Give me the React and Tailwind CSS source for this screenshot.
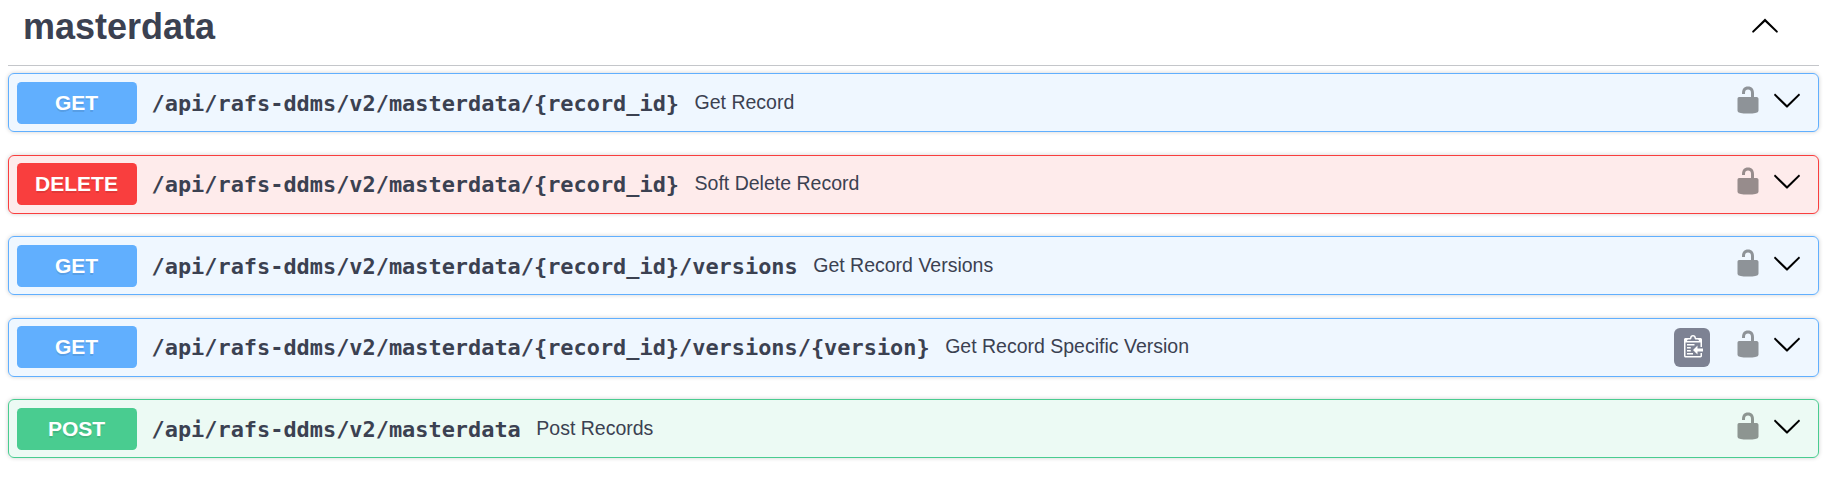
const ARROW_UP =
  "M 17.418 14.908 C 17.69 15.176 18.127 15.176 18.397 14.908 C 18.667 14.64 18.668 14.207 18.397 13.939 L 10.489 6.109 C 10.219 5.841 9.782 5.841 9.51 6.109 L 1.602 13.939 C 1.332 14.207 1.332 14.64 1.602 14.908 C 1.873 15.176 2.311 15.176 2.581 14.908 L 10 7.767 L 17.418 14.908 Z";
const ARROW_DOWN =
  "M17.418 6.109c.272-.268.709-.268.979 0s.271.701 0 .969l-7.908 7.83c-.27.268-.707.268-.979 0l-7.908-7.83c-.27-.268-.27-.701 0-.969.271-.268.709-.268.979 0L10 13.25l7.418-7.141z";
const UNLOCKED =
  "M15.8 8H14V5.6C14 2.703 12.665 1 10 1 7.334 1 6 2.703 6 5.6V6h2v-.801C8 3.754 8.797 3 10 3c1.203 0 2 .754 2 2.199V8H4c-.553 0-1 .646-1 1.199V17c0 .549.428 1.139.951 1.307l1.197.387C5.672 18.861 6.55 19 7.1 19h5.8c.549 0 1.428-.139 1.951-.307l1.196-.387c.524-.167.953-.757.953-1.306V9.199C17 8.646 16.352 8 15.8 8z";
const CLIPBOARD =
  "M4 12h4v1H4v-1zm5-6H4v1h5V6zm2 3V7l-3 3 3 3v-2h5V9h-5zM6.5 8H4v1h2.5V8zM4 11h2.5v-1H4v1zm9 1h1v2c-.02.28-.11.52-.3.7-.19.18-.42.28-.7.3H3c-.55 0-1-.45-1-1V3c0-.55.45-1 1-1h3c0-1.11.89-2 2-2 1.11 0 2 .89 2 2h3c.55 0 1 .45 1 1v5h-1V5H3v9h10v-2zM4 4h8c0-.55-.45-1-1-1h-1c-.55 0-1-.45-1-1s-.45-1-1-1-1 .45-1 1-.45 1-1 1H5c-.55 0-1 .45-1 1z";

const METHODS = {
  GET: { block: "border-[#61affe] bg-[#61affe]/10", badge: "bg-[#61affe]" },
  DELETE: { block: "border-[#f93e3e] bg-[#f93e3e]/10", badge: "bg-[#f93e3e]" },
  POST: { block: "border-[#49cc90] bg-[#49cc90]/10", badge: "bg-[#49cc90]" },
};

const OPERATIONS = [
  { method: "GET", path: "/api/rafs-ddms/v2/masterdata/{record_id}", summary: "Get Record", gap: "mb-[23px]", pad: "pt-2" },
  { method: "DELETE", path: "/api/rafs-ddms/v2/masterdata/{record_id}", summary: "Soft Delete Record", gap: "mb-[22px]", pad: "pt-[7px]" },
  { method: "GET", path: "/api/rafs-ddms/v2/masterdata/{record_id}/versions", summary: "Get Record Versions", gap: "mb-[23px]", pad: "pt-2" },
  { method: "GET", path: "/api/rafs-ddms/v2/masterdata/{record_id}/versions/{version}", summary: "Get Record Specific Version", gap: "mb-[22px]", pad: "pt-[7px]", copy: true },
  { method: "POST", path: "/api/rafs-ddms/v2/masterdata", summary: "Post Records", gap: "mb-0", pad: "pt-2" },
];

function Icon({ d, className = "" }) {
  return (
    <svg viewBox="0 0 20 20" className={`size-[30px] shrink-0 ${className}`} aria-hidden="true">
      <path d={d} />
    </svg>
  );
}

function Operation({ method, path, summary, gap, pad, copy }) {
  const colors = METHODS[method];
  return (
    <div className={`flex h-[59px] items-start rounded-[6px] border pl-2 pr-4 shadow-[0_0_4.5px_rgba(0,0,0,0.19)] ${colors.block} ${gap} ${pad}`}>
      <div className={`flex h-[42px] w-[120px] shrink-0 items-center justify-center rounded-[4.5px] pr-px text-[21px] leading-6 font-bold text-white [text-shadow:0_1.5px_0_rgba(0,0,0,0.1)] ${colors.badge}`}>
        {method}
      </div>
      <div className="flex h-[42px] items-center pl-[14.5px]">
        <span className="mt-0.5 whitespace-nowrap font-['DejaVu_Sans_Mono',monospace] text-[21.92px] leading-6 font-bold">{path}</span>
        <span className="mb-0.5 ml-[15.5px] whitespace-nowrap text-[19.5px] leading-6">{summary}</span>
      </div>
      <div className="ml-auto flex h-[42px] items-center">
        {copy && (
          <button className="mr-[23px] flex h-[39px] w-9 items-center justify-center rounded-[6px] bg-[#7d8293]">
            <svg viewBox="0 0 15 16" className="h-6 w-[22.5px]" aria-hidden="true">
              <path fill="#fff" fillRule="evenodd" d={CLIPBOARD} />
            </svg>
          </button>
        )}
        <Icon d={UNLOCKED} className="mb-1.5 opacity-40" />
        <Icon d={ARROW_DOWN} className="mb-1.5 ml-[9px]" />
      </div>
    </div>
  );
}

export default function App() {
  return (
    <div className="h-[477px] bg-white pr-[11px] pl-2 font-['Liberation_Sans',Arial,sans-serif] text-[#3b4151]">
      <div className="mb-[7px] flex h-[66px] items-start justify-between border-b border-[#3b4151]/30 pr-[39px] pl-[15px]">
        <h3 className="pt-1.5 text-[36px] leading-[42px] font-bold">masterdata</h3>
        <Icon d={ARROW_UP} className="mt-2.5" />
      </div>
      {OPERATIONS.map((op) => (
        <Operation key={op.method + op.path} {...op} />
      ))}
    </div>
  );
}
